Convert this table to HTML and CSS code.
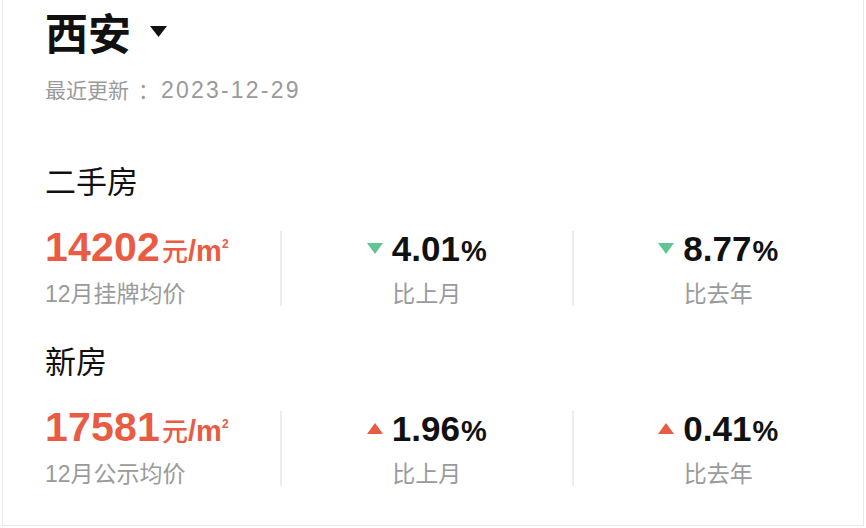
FILE: index.html
```html
<!DOCTYPE html>
<html lang="zh-CN">
<head>
<meta charset="utf-8">
<title>西安房价</title>
<link rel="stylesheet" href="styles.css">
</head>
<body>
<div class="card">
  <div class="city">
    <span class="city-name">西安</span>
    <svg class="caret" width="17" height="11" viewBox="0 0 17 11"><path d="M0 0H17L8.5 11Z" fill="#111"/></svg>
  </div>
  <div class="updated">最近更新<span class="colon">：</span><span class="date">2023-12-29</span></div>

  <section class="block">
    <h2 class="block-title">二手房</h2>
    <div class="stats">
      <div class="stat-main">
        <div class="price"><span class="price-num">14202</span><span class="unit">元</span><span class="unit-m">/m<span class="sq">2</span></span></div>
        <div class="label">12月挂牌均价</div>
      </div>
      <div class="sep"></div>
      <div class="stat-change">
        <div class="change">
          <svg class="tri" width="16" height="11" viewBox="0 0 16 11"><path d="M0 0H16L8 11Z" fill="#5fc592"/></svg>
          <span class="pct-text">4.01<span class="pct">%</span></span>
        </div>
        <div class="label">比上月</div>
      </div>
      <div class="sep"></div>
      <div class="stat-change">
        <div class="change">
          <svg class="tri" width="16" height="11" viewBox="0 0 16 11"><path d="M0 0H16L8 11Z" fill="#5fc592"/></svg>
          <span class="pct-text">8.77<span class="pct">%</span></span>
        </div>
        <div class="label">比去年</div>
      </div>
    </div>
  </section>

  <section class="block block-second">
    <h2 class="block-title">新房</h2>
    <div class="stats">
      <div class="stat-main">
        <div class="price"><span class="price-num">17581</span><span class="unit">元</span><span class="unit-m">/m<span class="sq">2</span></span></div>
        <div class="label">12月公示均价</div>
      </div>
      <div class="sep"></div>
      <div class="stat-change">
        <div class="change">
          <svg class="tri" width="16" height="11" viewBox="0 0 16 11"><path d="M0 11H16L8 0Z" fill="#e95b42"/></svg>
          <span class="pct-text">1.96<span class="pct">%</span></span>
        </div>
        <div class="label">比上月</div>
      </div>
      <div class="sep"></div>
      <div class="stat-change">
        <div class="change">
          <svg class="tri" width="16" height="11" viewBox="0 0 16 11"><path d="M0 11H16L8 0Z" fill="#e95b42"/></svg>
          <span class="pct-text">0.41<span class="pct">%</span></span>
        </div>
        <div class="label">比去年</div>
      </div>
    </div>
  </section>
</div>
</body>
</html>
```

FILE: styles.css
```css
html, body {
  margin: 0;
  padding: 0;
  background: #ffffff;
}

body {
  font-family: "Liberation Sans", "Noto Sans CJK SC", sans-serif;
  color: #111111;
}

.card {
  margin-left: 2px;
  width: 862px;
  height: 526px;
  box-sizing: border-box;
  border: 1px solid #e9e9e9;
  border-top: none;
  padding: 6px 0 0 42px;
  background: #ffffff;
}

.city {
  display: flex;
  align-items: center;
  height: 50px;
}

.city-name {
  font-family: "Noto Sans CJK SC", sans-serif;
  font-weight: 700;
  font-size: 43px;
  line-height: 50px;
  color: #111111;
}

.caret {
  margin-left: 19px;
  display: block;
}

.updated {
  margin-top: 18px;
  font-family: "Noto Sans CJK SC", sans-serif;
  font-size: 21px;
  line-height: 30px;
  color: #9a9a9a;
  white-space: nowrap;
}

.colon {
  margin-left: 9px;
}

.date {
  font-family: "Liberation Sans", sans-serif;
  font-size: 23px;
  letter-spacing: 2.2px;
  margin-left: 2px;
}

.block {
  margin-top: 55px;
}

.block-second {
  margin-top: 31px;
}

.block-title {
  margin: 0;
  font-family: "Noto Sans CJK SC", sans-serif;
  font-weight: 400;
  font-size: 31px;
  line-height: 40px;
  color: #111111;
}

.stats {
  margin-top: 25px;
  display: grid;
  grid-template-columns: 235px 2px 1fr 2px 1fr;
  align-items: start;
}

.sep {
  background: #ececec;
  height: 75px;
  margin-top: 6px;
}

.price {
  font-family: "Liberation Sans", sans-serif;
  font-weight: 700;
  font-size: 41px;
  line-height: 44px;
  height: 44px;
  color: #e95b42;
  white-space: nowrap;
}

.price-num {
  letter-spacing: 0.2px;
}

.unit {
  font-family: "Noto Sans CJK SC", sans-serif;
  font-weight: 500;
  font-size: 26px;
  line-height: 1;
  margin-left: 2px;
}

.unit-m {
  font-family: "Liberation Sans", sans-serif;
  font-weight: 700;
  font-size: 29px;
  line-height: 1;
}

.sq {
  font-size: 12px;
  line-height: 1;
  vertical-align: 13px;
  margin-left: 0;
}

.label {
  font-family: "Liberation Sans", "Noto Sans CJK SC", sans-serif;
  font-size: 23px;
  line-height: 30px;
  color: #9a9a9a;
  white-space: nowrap;
}

.stat-main .label {
  margin-top: 10px;
}

.stat-change {
  display: flex;
  flex-direction: column;
  align-items: center;
}

.stat-change .label {
  margin-top: 4px;
}

.change {
  display: flex;
  align-items: center;
  height: 50px;
}

.tri {
  display: block;
  margin-right: 9px;
  margin-bottom: 3px;
}

.pct-text {
  font-family: "Liberation Sans", sans-serif;
  font-weight: 700;
  font-size: 35px;
  line-height: 50px;
  color: #111111;
  white-space: nowrap;
}

.pct {
  font-size: 29px;
  margin-left: 1px;
}
```
